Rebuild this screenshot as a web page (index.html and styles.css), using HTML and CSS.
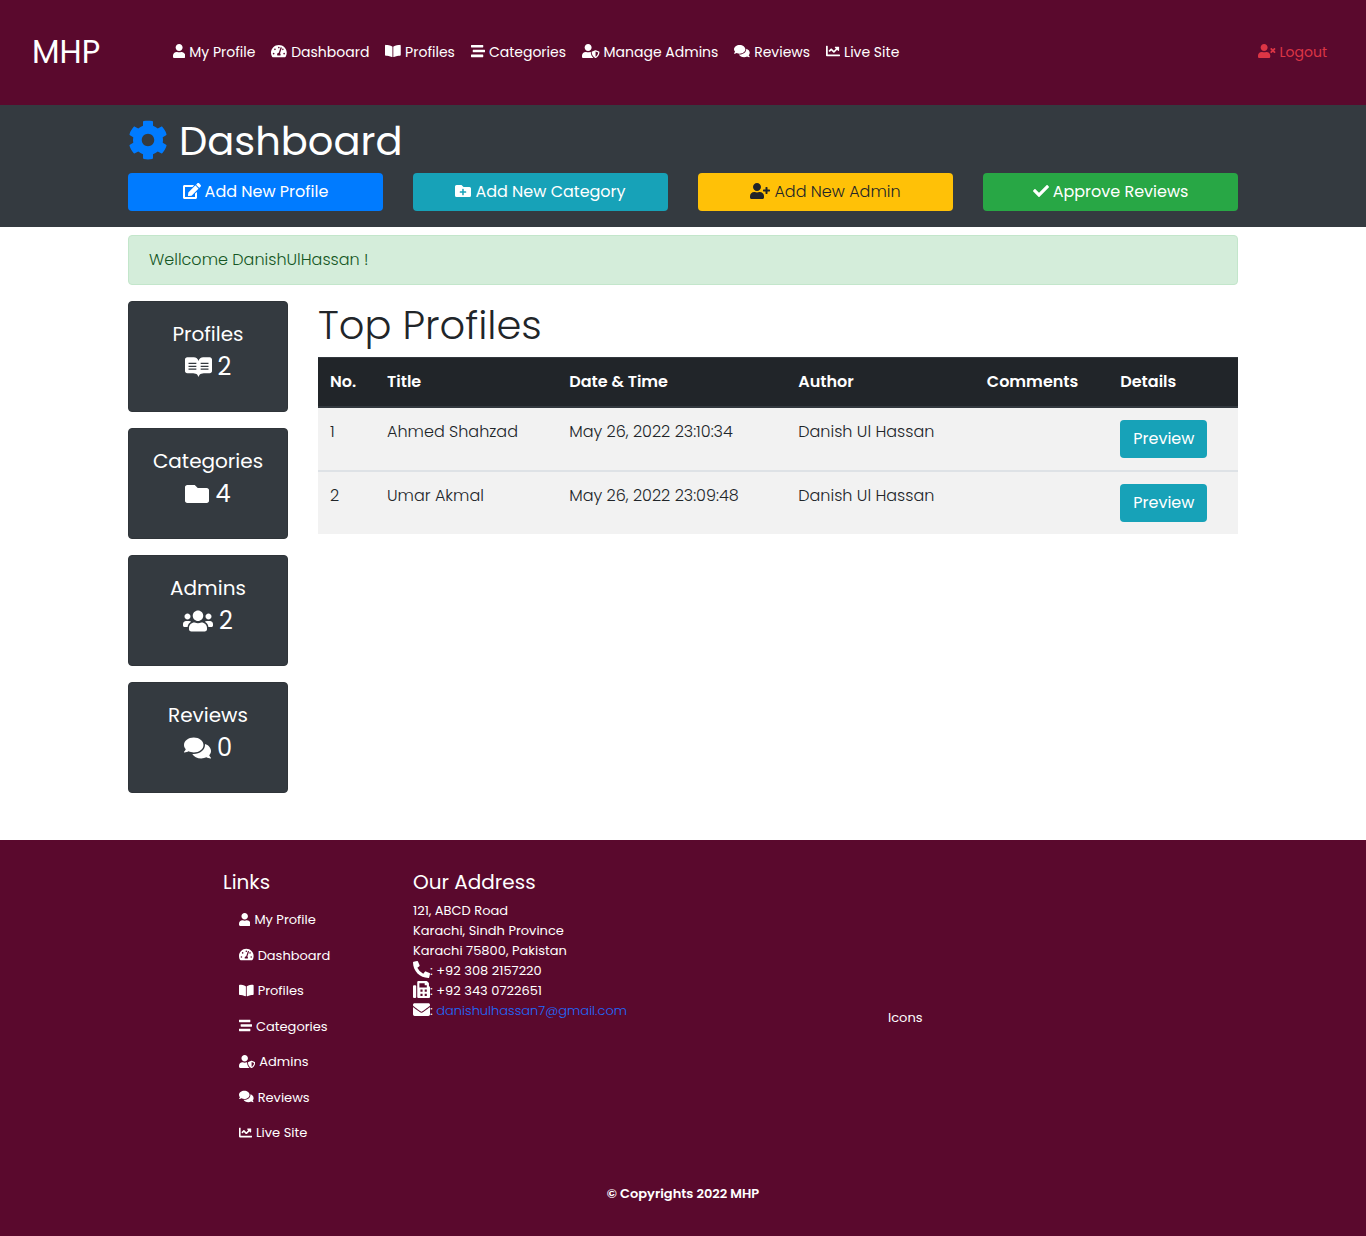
FILE: index.html
```html
<!DOCTYPE html>
<html lang="en">
<head>
<meta charset="utf-8">
<meta name="viewport" content="width=device-width, initial-scale=1">
<title>Dashboard</title>
<link rel="stylesheet" href="styles.css">
</head>
<body>
<svg class="sprite" aria-hidden="true">
<defs>
<path id="user" d="M224 256c70.700 0 128-57.300 128-128S294.700 0 224 0 96 57.300 96 128s57.300 128 128 128zm89.600 32h-16.700c-22.200 10.200-46.900 16-72.900 16s-50.600-5.800-72.900-16h-16.700C60.200 288 0 348.200 0 422.400V464c0 26.500 21.500 48 48 48h352c26.500 0 48-21.500 48-48v-41.600c0-74.200-60.200-134.400-134.400-134.400z"/>
<path id="gauge" d="M288 32C128.940 32 0 160.940 0 320c0 52.800 14.250 102.260 39.060 144.800 5.610 9.620 16.300 15.200 27.440 15.200h443c11.140 0 21.830-5.580 27.440-15.200C561.750 422.260 576 372.800 576 320c0-159.060-128.940-288-288-288zm0 64c14.710 0 26.580 10.130 30.320 23.650-1.110 2.260-2.640 4.230-3.450 6.670l-9.220 27.670c-5.130 3.490-10.970 6.010-17.640 6.010-17.670 0-32-14.330-32-32S270.330 96 288 96zM96 384c-17.670 0-32-14.330-32-32s14.330-32 32-32 32 14.330 32 32-14.330 32-32 32zm48-160c-17.670 0-32-14.330-32-32s14.330-32 32-32 32 14.330 32 32-14.330 32-32 32zm246.770-72.410l-61.330 184C343.130 347.330 352 364.540 352 384c0 11.720-3.380 22.550-8.880 32H232.880c-5.500-9.450-8.880-20.280-8.880-32 0-33.940 26.500-61.430 59.900-63.590l61.340-184.010c4.170-12.560 17.730-19.450 30.360-15.170 12.570 4.190 19.350 17.790 15.170 30.360zm14.660 57.200l15.520-46.550c3.470-1.290 7.130-2.230 11.050-2.230 17.670 0 32 14.330 32 32s-14.330 32-32 32c-11.380-.010-20.890-6.280-26.570-15.220zM480 384c-17.670 0-32-14.330-32-32s14.330-32 32-32 32 14.330 32 32-14.330 32-32 32z"/>
<path id="book" d="M542.220 32.050c-54.800 3.110-163.720 14.430-230.960 55.590-4.640 2.840-7.270 7.890-7.270 13.170v363.870c0 11.550 12.630 18.850 23.280 13.490 69.180-34.820 169.230-44.320 218.700-46.920 16.890-.890 30.020-14.430 30.020-30.660V62.750c.010-17.710-15.350-31.740-33.770-30.700zM264.730 87.640C197.500 46.480 88.580 35.170 33.780 32.050 15.360 31.010 0 45.040 0 62.750V400.600c0 16.240 13.130 29.780 30.020 30.660 49.490 2.600 149.590 12.110 218.770 46.950 10.620 5.350 23.210-1.940 23.210-13.460V100.630c0-5.290-2.620-10.140-7.270-12.990z"/>
<path id="stream" d="M16 128h416c8.840 0 16-7.160 16-16V48c0-8.840-7.160-16-16-16H16C7.160 32 0 39.160 0 48v64c0 8.840 7.160 16 16 16zm480 80H80c-8.840 0-16 7.160-16 16v64c0 8.840 7.160 16 16 16h416c8.840 0 16-7.160 16-16v-64c0-8.840-7.160-16-16-16zm-64 176H16c-8.840 0-16 7.160-16 16v64c0 8.840 7.160 16 16 16h416c8.840 0 16-7.160 16-16v-64c0-8.840-7.160-16-16-16z"/>
<path id="shield" d="M622.300 271.100l-115.200-45c-4.100-1.600-12.600-3.700-22.200 0l-115.200 45c-10.700 4.200-17.700 14-17.700 24.900 0 111.600 68.700 188.800 132.900 213.900 9.600 3.700 18 1.600 22.200 0C558.400 489.900 640 420.500 640 296c0-10.900-7-20.700-17.700-24.900zM496 462.400V273.300l95.500 37.300c-5.600 87.100-60.900 135.400-95.500 151.800zM224 256c70.700 0 128-57.300 128-128S294.700 0 224 0 96 57.300 96 128s57.300 128 128 128zm96 40c0-2.500.8-4.800 1.100-7.200-2.500-.1-4.900-.8-7.500-.8h-16.700c-22.200 10.200-46.900 16-72.900 16s-50.600-5.800-72.900-16h-16.700C60.200 288 0 348.200 0 422.400V464c0 26.500 21.500 48 48 48h352c6.800 0 13.300-1.500 19.200-4-54-42.900-99.200-116.700-99.200-212z"/>
<path id="comments" d="M416 192c0-88.400-93.100-160-208-160S0 103.600 0 192c0 34.300 14.100 65.900 38 92-13.400 30.200-35.500 54.200-35.800 54.500-2.200 2.300-2.800 5.700-1.500 8.700S4.800 352 8 352c36.600 0 66.900-12.300 88.700-25 32.200 15.700 70.300 25 111.300 25 114.900 0 208-71.600 208-160zm122 220c23.900-26 38-57.700 38-92 0-66.900-53.500-124.200-129.300-148.100.9 6.600 1.300 13.300 1.300 20.100 0 105.900-107.700 192-240 192-10.800 0-21.300-.8-31.700-1.900C207.800 439.600 281.800 480 368 480c41 0 79.100-9.200 111.300-25 21.800 12.700 52.100 25 88.700 25 3.200 0 6.100-1.900 7.300-4.800 1.300-2.900.7-6.300-1.500-8.700-.3-.3-22.400-24.200-35.800-54.500z"/>
<path id="chart" d="M496 384H64V80c0-8.840-7.160-16-16-16H16C7.160 64 0 71.160 0 80v336c0 17.670 14.330 32 32 32h464c8.840 0 16-7.160 16-16v-32c0-8.840-7.160-16-16-16zM464 96H345.940c-21.380 0-32.090 25.850-16.970 40.970l32.400 32.400L288 242.750l-73.370-73.370c-12.500-12.500-32.760-12.500-45.250 0l-68.690 68.690c-6.250 6.250-6.250 16.380 0 22.630l22.620 22.620c6.250 6.250 16.380 6.250 22.630 0L192 237.250l73.370 73.370c12.500 12.500 32.760 12.500 45.250 0l96-96 32.400 32.400c15.120 15.120 40.970 4.410 40.970-16.970V112c.010-8.840-7.150-16-15.990-16z"/>
<path id="times" d="M589.600 240l45.600-45.600c6.300-6.300 6.300-16.500 0-22.800l-22.800-22.800c-6.300-6.300-16.500-6.300-22.800 0L544 194.400l-45.600-45.600c-6.300-6.300-16.500-6.300-22.800 0l-22.800 22.800c-6.300 6.300-6.300 16.500 0 22.800l45.600 45.600-45.600 45.600c-6.300 6.300-6.300 16.500 0 22.800l22.800 22.800c6.300 6.300 16.500 6.300 22.800 0l45.600-45.600 45.600 45.600c6.300 6.300 16.500 6.300 22.800 0l22.800-22.800c6.300-6.300 6.300-16.500 0-22.800L589.600 240z"/>
<path id="plus" d="M624 208h-64v-64c0-8.800-7.200-16-16-16h-32c-8.800 0-16 7.200-16 16v64h-64c-8.800 0-16 7.200-16 16v32c0 8.800 7.200 16 16 16h64v64c0 8.800 7.200 16 16 16h32c8.800 0 16-7.200 16-16v-64h64c8.800 0 16-7.200 16-16v-32c0-8.800-7.200-16-16-16z"/>
</defs>
</svg>

<nav class="navbar" aria-label="Main">
  <a class="brand" href="#">MHP</a>
  <ul class="nav-list">
    <li><a href="#"><svg class="icon" viewBox="0 0 448 512"><use href="#user"/></svg> My Profile</a></li>
    <li><a href="#"><svg class="icon" viewBox="0 0 576 512"><use href="#gauge"/></svg> Dashboard</a></li>
    <li><a href="#"><svg class="icon" viewBox="0 0 576 512"><use href="#book"/></svg> Profiles</a></li>
    <li><a href="#"><svg class="icon" viewBox="0 0 512 512"><use href="#stream"/></svg> Categories</a></li>
    <li><a href="#"><svg class="icon" viewBox="0 0 640 512"><use href="#shield"/></svg> Manage Admins</a></li>
    <li><a href="#"><svg class="icon" viewBox="0 0 576 512"><use href="#comments"/></svg> Reviews</a></li>
    <li><a href="#"><svg class="icon" viewBox="0 0 512 512"><use href="#chart"/></svg> Live Site</a></li>
  </ul>
  <a class="logout" href="#"><svg class="icon" viewBox="0 0 640 512"><use href="#user"/><use href="#times"/></svg> Logout</a>
</nav>

<header class="page-head">
  <div class="container">
    <h1><svg class="icon" viewBox="0 0 512 512"><path d="M487.400 315.700l-42.600-24.600c4.300-23.200 4.300-47 0-70.200l42.600-24.600c4.900-2.800 7.100-8.600 5.500-14-11.100-35.600-30-67.800-54.700-94.600-3.800-4.100-10-5.100-14.800-2.300L380.800 110c-17.900-15.400-38.500-27.300-60.800-35.100V25.800c0-5.600-3.900-10.500-9.400-11.700-36.700-8.200-74.300-7.800-109.200 0-5.500 1.200-9.400 6.100-9.400 11.700V75c-22.200 7.900-42.800 19.800-60.800 35.100L88.700 85.500c-4.900-2.800-11-1.900-14.800 2.300-24.700 26.700-43.600 58.900-54.700 94.600-1.700 5.400.6 11.200 5.500 14L67.300 221c-4.300 23.200-4.300 47 0 70.200l-42.600 24.600c-4.900 2.800-7.100 8.600-5.500 14 11.100 35.600 30 67.800 54.700 94.600 3.800 4.100 10 5.100 14.800 2.300l42.600-24.600c17.900 15.400 38.500 27.300 60.800 35.100v49.200c0 5.600 3.900 10.500 9.400 11.700 36.700 8.200 74.300 7.800 109.200 0 5.500-1.200 9.400-6.100 9.400-11.700v-49.200c22.200-7.900 42.800-19.800 60.800-35.100l42.600 24.600c4.900 2.800 11 1.900 14.800-2.300 24.700-26.700 43.600-58.900 54.700-94.600 1.500-5.500-.7-11.300-5.600-14.100zM256 336c-44.100 0-80-35.900-80-80s35.900-80 80-80 80 35.900 80 80-35.900 80-80 80z"/></svg> Dashboard</h1>
    <div class="actions">
      <a class="btn primary" href="#"><svg class="icon" viewBox="0 0 576 512"><path d="M402.600 83.200l90.200 90.200c3.800 3.800 3.800 10 0 13.800L274.400 405.600l-92.800 10.300c-12.400 1.400-22.900-9.100-21.500-21.500l10.300-92.800L388.800 83.200c3.800-3.800 10-3.800 13.800 0zm162-22.900l-48.800-48.800c-15.200-15.200-39.900-15.200-55.200 0l-35.400 35.400c-3.800 3.800-3.800 10 0 13.800l90.200 90.200c3.800 3.800 10 3.800 13.800 0l35.400-35.400c15.200-15.300 15.200-40 0-55.200zM384 346.200V448H64V128h229.800c3.200 0 6.200-1.300 8.500-3.500l40-40c7.600-7.600 2.200-20.500-8.500-20.500H48C21.500 64 0 85.500 0 112v352c0 26.500 21.500 48 48 48h352c26.500 0 48-21.500 48-48V306.200c0-10.700-12.900-16-20.500-8.500l-40 40c-2.200 2.300-3.500 5.300-3.500 8.500z"/></svg> Add New Profile</a>
      <a class="btn info" href="#"><svg class="icon" viewBox="0 0 512 512"><path d="M464,128H272L208,64H48A48,48,0,0,0,0,112V400a48,48,0,0,0,48,48H464a48,48,0,0,0,48-48V176A48,48,0,0,0,464,128ZM359.500,296a16,16,0,0,1-16,16h-64v64a16,16,0,0,1-16,16h-16a16,16,0,0,1-16-16V312h-64a16,16,0,0,1-16-16V280a16,16,0,0,1,16-16h64V200a16,16,0,0,1,16-16h16a16,16,0,0,1,16,16v64h64a16,16,0,0,1,16,16Z"/></svg> Add New Category</a>
      <a class="btn warning" href="#"><svg class="icon" viewBox="0 0 640 512"><use href="#user"/><use href="#plus"/></svg> Add New Admin</a>
      <a class="btn success" href="#"><svg class="icon" viewBox="0 0 512 512"><path d="M173.898 439.404l-166.400-166.400c-9.997-9.997-9.997-26.206 0-36.204l36.203-36.204c9.997-9.998 26.207-9.998 36.204 0L192 312.690 432.095 72.596c9.997-9.997 26.207-9.997 36.204 0l36.203 36.204c9.997 9.997 9.997 26.206 0 36.204l-294.400 294.401c-9.998 9.997-26.207 9.997-36.204-.001z"/></svg> Approve Reviews</a>
    </div>
  </div>
</header>

<main class="container">
  <p class="alert" role="status">Wellcome DanishUlHassan !</p>
  <div class="content">
    <aside class="stats">
      <section class="card"><h2>Profiles</h2><p><svg class="icon" viewBox="0 0 576 512"><path fill-rule="evenodd" d="M528.300 46.500H388.500c-48.100 0-89.900 33.300-100.400 80.300-10.600-47-52.300-80.300-100.400-80.300H48c-26.500 0-48 21.500-48 48v245.800c0 26.500 21.500 48 48 48h89.700c102.200 0 132.700 24.400 147.300 75 .7 2.800 5.200 2.800 6 0 14.700-50.600 45.200-75 147.300-75H528c26.500 0 48-21.500 48-48V94.600c0-26.400-21.300-47.900-47.700-48.100zM75 167h167v26H75zM75 228h167v26H75zM75 289h167v26H75zM334 167h167v26H334zM334 228h167v26H334zM334 289h167v26H334z"/></svg> 2</p></section>
      <section class="card"><h2>Categories</h2><p><svg class="icon" viewBox="0 0 512 512"><path d="M464 128H272l-64-64H48C21.490 64 0 85.490 0 112v288c0 26.510 21.490 48 48 48h416c26.510 0 48-21.490 48-48V176c0-26.510-21.490-48-48-48z"/></svg> 4</p></section>
      <section class="card"><h2>Admins</h2><p><svg class="icon" viewBox="0 0 640 512"><path d="M96 224c35.300 0 64-28.700 64-64s-28.700-64-64-64-64 28.700-64 64 28.700 64 64 64zm448 0c35.300 0 64-28.700 64-64s-28.700-64-64-64-64 28.700-64 64 28.700 64 64 64zm32 32h-64c-17.600 0-33.500 7.100-45.100 18.600 40.300 22.100 68.900 62 75.100 109.400h66c17.700 0 32-14.300 32-32v-32c0-35.300-28.700-64-64-64zm-256 0c61.900 0 112-50.100 112-112S381.900 32 320 32 208 82.100 208 144s50.100 112 112 112zm76.800 32h-8.300c-20.800 10-43.900 16-68.500 16s-47.600-6-68.500-16h-8.300C179.600 288 128 339.600 128 403.200V432c0 26.500 21.500 48 48 48h288c26.500 0 48-21.500 48-48v-28.800c0-63.600-51.600-115.200-115.200-115.200zm-223.700-13.400C161.500 263.100 145.600 256 128 256H64c-35.300 0-64 28.700-64 64v32c0 17.700 14.300 32 32 32h65.900c6.300-47.400 34.900-87.300 75.200-109.400z"/></svg> 2</p></section>
      <section class="card"><h2>Reviews</h2><p><svg class="icon" viewBox="0 0 576 512"><use href="#comments"/></svg> 0</p></section>
    </aside>
    <section class="top">
      <h2>Top Profiles</h2>
      <table>
        <colgroup><col class="c-no"><col class="c-title"><col class="c-date"><col class="c-author"><col class="c-comments"><col class="c-details"></colgroup>
        <thead><tr><th>No.</th><th>Title</th><th>Date &amp; Time</th><th>Author</th><th>Comments</th><th>Details</th></tr></thead>
        <tbody>
          <tr><td>1</td><td>Ahmed Shahzad</td><td>May 26, 2022 23:10:34</td><td>Danish Ul Hassan</td><td></td><td><a class="btn info" href="#">Preview</a></td></tr>
          <tr><td>2</td><td>Umar Akmal</td><td>May 26, 2022 23:09:48</td><td>Danish Ul Hassan</td><td></td><td><a class="btn info" href="#">Preview</a></td></tr>
        </tbody>
      </table>
    </section>
  </div>
</main>

<footer>
  <div class="foot-grid">
    <section class="links">
      <h2>Links</h2>
      <ul>
        <li><a href="#"><svg class="icon" viewBox="0 0 448 512"><use href="#user"/></svg> My Profile</a></li>
        <li><a href="#"><svg class="icon" viewBox="0 0 576 512"><use href="#gauge"/></svg> Dashboard</a></li>
        <li><a href="#"><svg class="icon" viewBox="0 0 576 512"><use href="#book"/></svg> Profiles</a></li>
        <li><a href="#"><svg class="icon" viewBox="0 0 512 512"><use href="#stream"/></svg> Categories</a></li>
        <li><a href="#"><svg class="icon" viewBox="0 0 640 512"><use href="#shield"/></svg> Admins</a></li>
        <li><a href="#"><svg class="icon" viewBox="0 0 576 512"><use href="#comments"/></svg> Reviews</a></li>
        <li><a href="#"><svg class="icon" viewBox="0 0 512 512"><use href="#chart"/></svg> Live Site</a></li>
      </ul>
    </section>
    <section class="address">
      <h2>Our Address</h2>
      <address>
        121, ABCD Road<br>
        Karachi, Sindh Province<br>
        Karachi 75800, Pakistan<br>
        <svg class="icon" viewBox="0 0 512 512"><path d="M497.390 361.800l-112-48a24 24 0 0 0-28 6.900l-49.600 60.600A370.660 370.660 0 0 1 130.600 204.110l60.600-49.600a23.940 23.940 0 0 0 6.900-28l-48-112A24.160 24.160 0 0 0 122.600.610l-104 24A24 24 0 0 0 0 48c0 256.500 207.900 464 464 464a24 24 0 0 0 23.400-18.600l24-104a24.290 24.290 0 0 0-14.010-27.600z"/></svg>: +92 308 2157220<br>
        <svg class="icon" viewBox="0 0 512 512"><path fill-rule="evenodd" d="M480 160V77.250a32 32 0 0 0-9.380-22.630L425.370 9.370A32 32 0 0 0 402.750 0H160a32 32 0 0 0-32 32v448a32 32 0 0 0 32 32h320a32 32 0 0 0 32-32V192a32 32 0 0 0-32-32zM224 256h64v64h-64zM352 256h64v64h-64zM224 384h64v64h-64zM352 384h64v64h-64zM192 192V64h160v48a16 16 0 0 0 16 16h48v64zM64 128H32a32 32 0 0 0-32 32v320a32 32 0 0 0 32 32h32a32 32 0 0 0 32-32V160a32 32 0 0 0-32-32z"/></svg>: +92 343 0722651<br>
        <svg class="icon" viewBox="0 0 512 512"><path d="M502.300 190.800c3.900-3.100 9.700-.2 9.700 4.700V400c0 26.500-21.500 48-48 48H48c-26.500 0-48-21.500-48-48V195.600c0-5 5.700-7.800 9.700-4.700 22.400 17.400 52.100 39.500 154.100 113.600 21.100 15.400 56.700 47.800 92.200 47.600 35.700.3 72-32.800 92.300-47.600 102-74.100 131.600-96.300 154-113.700zM256 320c23.200.4 56.600-29.200 73.400-41.400 132.700-96.300 142.800-104.700 173.400-128.700 5.800-4.500 9.200-11.500 9.200-18.900v-19c0-26.500-21.500-48-48-48H48c-26.500 0-48 21.500-48 48v19c0 7.400 3.400 14.300 9.200 18.900 30.600 23.900 40.700 32.400 173.400 128.700 16.800 12.200 50.200 41.800 73.400 41.400z"/></svg>: <a href="mailto:danishulhassan7@gmail.com">danishulhassan7@gmail.com</a>
      </address>
    </section>
    <p class="social">Icons</p>
  </div>
  <p class="copyright">© Copyrights 2022 MHP</p>
</footer>
</body>
</html>
```
FILE: styles.css
```css
* { box-sizing: border-box; }
body {
  margin: 0;
  background: #fff;
  color: #212529;
  font: 300 16px/24px Poppins, Inter, "Open Sans", sans-serif;
}
h1, h2, p, ul { margin: 0; padding: 0; font-weight: 300; }
ul { list-style: none; }
a { color: inherit; text-decoration: none; }
.sprite { position: absolute; width: 0; height: 0; }
.icon { height: 1em; width: auto; margin-bottom: 2px; fill: currentColor; flex: none; }
.container { max-width: 1140px; margin: 0 auto; padding: 0 15px; }

.navbar {
  display: flex;
  align-items: center;
  padding: 28px 39px 29px 32px;
  background: #5a092d;
  color: #fff;
  font-size: 14px;
}
.brand { width: 141px; font-size: 32px; line-height: 48px; font-weight: 400; }
.nav-list { display: flex; gap: 16px; font-weight: 400; }
.nav-list a, .links a, .logout { display: flex; align-items: center; gap: 4px; }
.logout { margin-left: auto; color: #dc3545; font-weight: 400; }

.page-head { background: #343a40; color: #fff; padding: 12px 0 16px; }
h1 { display: flex; align-items: center; gap: 11px; font-size: 40px; line-height: 48px; margin-bottom: 8px; font-weight: 400; }
h1 .icon { color: #007bff; }
.actions { display: grid; grid-template-columns: repeat(4, 1fr); gap: 30px; }
.btn {
  display: inline-flex;
  align-items: center;
  justify-content: center;
  gap: 4px;
  padding: 7px 13px;
  border-radius: 4px;
  color: #fff;
  font-weight: 400;
}
.primary { background: #007bff; }
.info { background: #17a2b8; }
.warning { background: #ffc107; color: #212529; font-weight: 300; }
.success { background: #28a745; }

.alert {
  margin: 8px 0 16px;
  padding: 12px 20px;
  border: 1px solid #c3e6cb;
  border-radius: 4px;
  background: #d4edda;
  color: #155724;
}
.content { display: grid; grid-template-columns: 160px 1fr; gap: 30px; padding-bottom: 47px; }
.stats { display: grid; gap: 16px; }
.card {
  padding: 20px 8px 28px;
  border: 1px solid #2f3439;
  border-radius: 4px;
  background: #343a40;
  color: #fff;
  text-align: center;
}
.card h2 { font-size: 20px; line-height: 24px; font-weight: 400; margin-bottom: 5px; }
.card p { display: flex; align-items: center; justify-content: center; gap: 6px; font-size: 24px; line-height: 32px; font-weight: 400; }
.card .icon { margin-bottom: 0; }

.top h2 { font-size: 40px; line-height: 48px; margin-bottom: 8px; font-weight: 300; }
table { width: 100%; table-layout: fixed; border-collapse: collapse; text-align: left; }
th, td { padding: 12px; vertical-align: top; line-height: 24px; }
th { background: #212529; color: #fff; font-weight: 600; border-top: 1px solid #32383e; border-bottom: 2px solid #32383e; }
td { background: #f2f2f2; }
td .btn { display: inline-flex; vertical-align: top; }
tbody tr + tr td { border-top: 2px solid #dee2e6; }
.c-no { width: 6.2%; }
.c-title { width: 19.8%; }
.c-date { width: 24.9%; }
.c-author { width: 20.5%; }
.c-comments { width: 14.5%; }
.c-details { width: 14.1%; }

footer { background: #5a092d; color: #fff; padding: 30px 0 33px; font-size: 13px; line-height: 20px; }
.foot-grid {
  display: grid;
  grid-template-columns: 1fr 2fr 5fr 4fr;
  max-width: 1140px;
  margin: 0 auto;
}
.foot-grid > * { padding: 0 15px; font-weight: 400; }
.links { grid-column: 2; }
footer h2 { font-size: 20px; line-height: 24px; font-weight: 400; margin-bottom: 7px; }
.links ul { display: grid; align-content: space-between; min-height: 265px; padding: 1px 16px 16px; font-weight: 400; }
.links a { padding: 8px 0 7px; }
address { font-style: normal; }
address .icon { height: 17px; margin: 0; vertical-align: -3px; }
address a { color: #1d6bff; font-weight: 300; }
.social { align-self: center; }
.copyright { margin-top: 18px; text-align: center; font-weight: 600; }
```
